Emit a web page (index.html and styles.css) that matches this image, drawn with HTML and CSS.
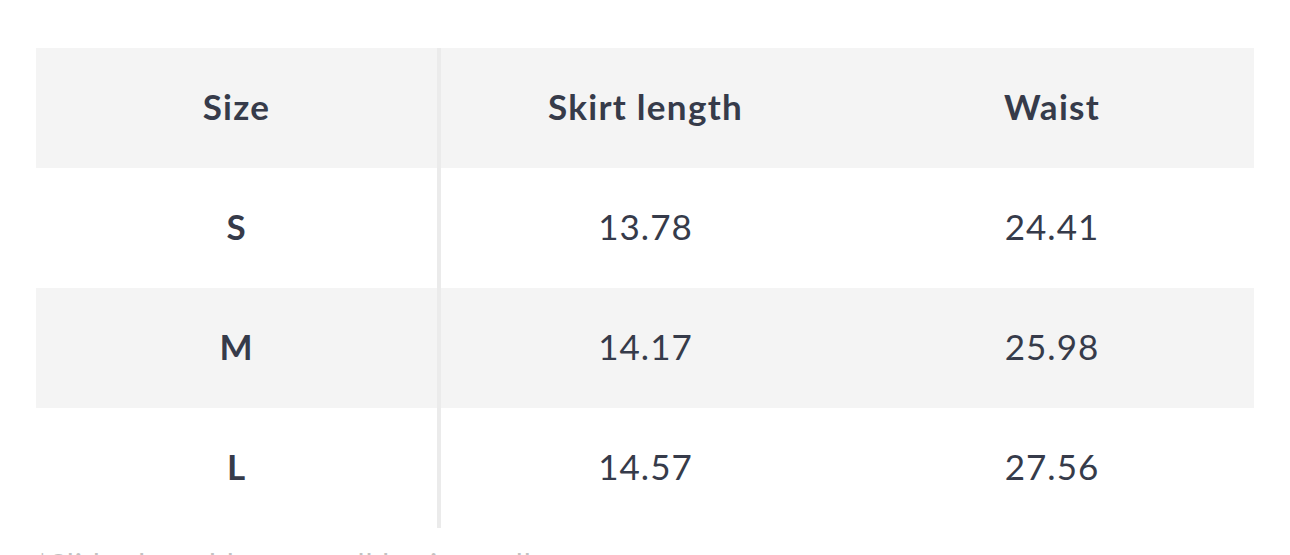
FILE: index.html
```html
<!DOCTYPE html>
<html>
<head>
<meta charset="utf-8">
<link rel="stylesheet" href="styles.css">
</head>
<body>
<div class="wrap">
  <div class="table">
    <div class="row head">
      <div class="cell first">Size</div>
      <div class="cell">Skirt length</div>
      <div class="cell">Waist</div>
    </div>
    <div class="row">
      <div class="cell first">S</div>
      <div class="cell">13.78</div>
      <div class="cell">24.41</div>
    </div>
    <div class="row alt">
      <div class="cell first">M</div>
      <div class="cell">14.17</div>
      <div class="cell">25.98</div>
    </div>
    <div class="row">
      <div class="cell first">L</div>
      <div class="cell">14.57</div>
      <div class="cell">27.56</div>
    </div>
  </div>
  <p class="note">*Slide the table to scroll horizontally</p>
</div>
</body>
</html>
```
FILE: styles.css
```css
html, body {
  margin: 0;
  padding: 0;
  background: #fff;
}
body {
  font-family: Lato, "Open Sans", sans-serif;
  color: #363b4a;
}
.wrap {
  padding: 48px 36px 0 36px;
}
.table {
  width: 1218px;
}
.row {
  display: grid;
  grid-template-columns: 405px 409px 404px;
  height: 120px;
}
.row.head, .row.alt {
  background: #f4f4f4;
}
.cell {
  display: flex;
  align-items: center;
  justify-content: center;
  padding-bottom: 4px;
  font-size: 35px;
  font-weight: 400;
  letter-spacing: 1px;
}
.cell.first {
  font-weight: 700;
  border-right: 4px solid #ebebeb;
}
.head .cell {
  font-weight: 700;
  letter-spacing: 1.3px;
}
.note {
  margin: 18px 0 0 0;
  font-size: 30px;
  letter-spacing: 1px;
  color: #c2c2c2;
}
```
